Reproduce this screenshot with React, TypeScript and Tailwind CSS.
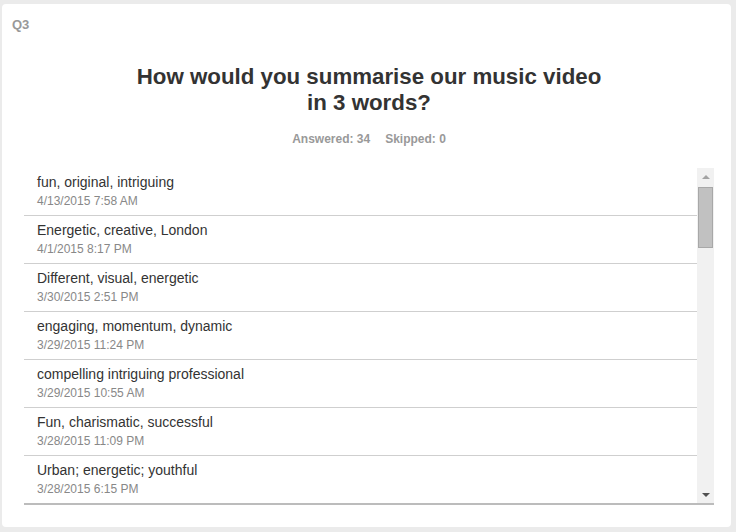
const responses = [
  { text: "fun, original, intriguing", date: "4/13/2015 7:58 AM" },
  { text: "Energetic, creative, London", date: "4/1/2015 8:17 PM" },
  { text: "Different, visual, energetic", date: "3/30/2015 2:51 PM" },
  { text: "engaging, momentum, dynamic", date: "3/29/2015 11:24 PM" },
  { text: "compelling intriguing professional", date: "3/29/2015 10:55 AM" },
  { text: "Fun, charismatic, successful", date: "3/28/2015 11:09 PM" },
  { text: "Urban; energetic; youthful", date: "3/28/2015 6:15 PM" },
];

const Scrollbar = () => (
  <div className="flex w-[17px] shrink-0 flex-col items-center bg-[#f1f1f1]">
    <div className="flex h-[17px] w-full items-center justify-center">
      <span className="h-0 w-0 border-x-[4px] border-b-[4px] border-x-transparent border-b-[#a3a3a3]" />
    </div>
    <div className="mt-[2px] h-[61px] w-[15px] border border-[#a8a8a8] bg-[#c1c1c1]" />
    <div className="flex-1" />
    <div className="flex h-[17px] w-full items-center justify-center">
      <span className="h-0 w-0 border-x-[4px] border-t-[4px] border-x-transparent border-t-[#505050]" />
    </div>
  </div>
);

export default function App() {
  return (
    <div className="min-h-[532px] bg-[#ebebeb] pl-[2px] pr-[5px] pt-[4px] pb-[5px] font-['Liberation_Sans',Arial,sans-serif]">
      <div className="h-[523px] rounded-[4px] bg-white pl-[22px] pr-[17px] pt-[13px]">
        <div className="-ml-[12px] text-[13px] font-bold leading-[16px] text-[#999]">Q3</div>
        <h1 className="mx-auto mt-[31px] w-[480px] text-center text-[22.3px] font-bold leading-[26px] text-[#333]">
          How would you summarise our music video in 3 words?
        </h1>
        <div className="mt-[16px] flex justify-center gap-[15px] text-[12px] font-bold leading-[14px] text-[#999]">
          <span>Answered: 34</span>
          <span>Skipped: 0</span>
        </div>
        <div className="mt-[22px] flex h-[337px] border-b-2 border-[#bcbcbc]">
          <div className="flex-1 overflow-hidden">
            {responses.map((r) => (
              <div key={r.date} className="h-[48px] border-b border-[#cfcfcf] pl-[13px] pt-[6px]">
                <div className="text-[14px] leading-[16px] text-[#333]">{r.text}</div>
                <div className="mt-[4px] text-[12px] leading-[14px] text-[#888]">{r.date}</div>
              </div>
            ))}
          </div>
          <Scrollbar />
        </div>
      </div>
    </div>
  );
}
